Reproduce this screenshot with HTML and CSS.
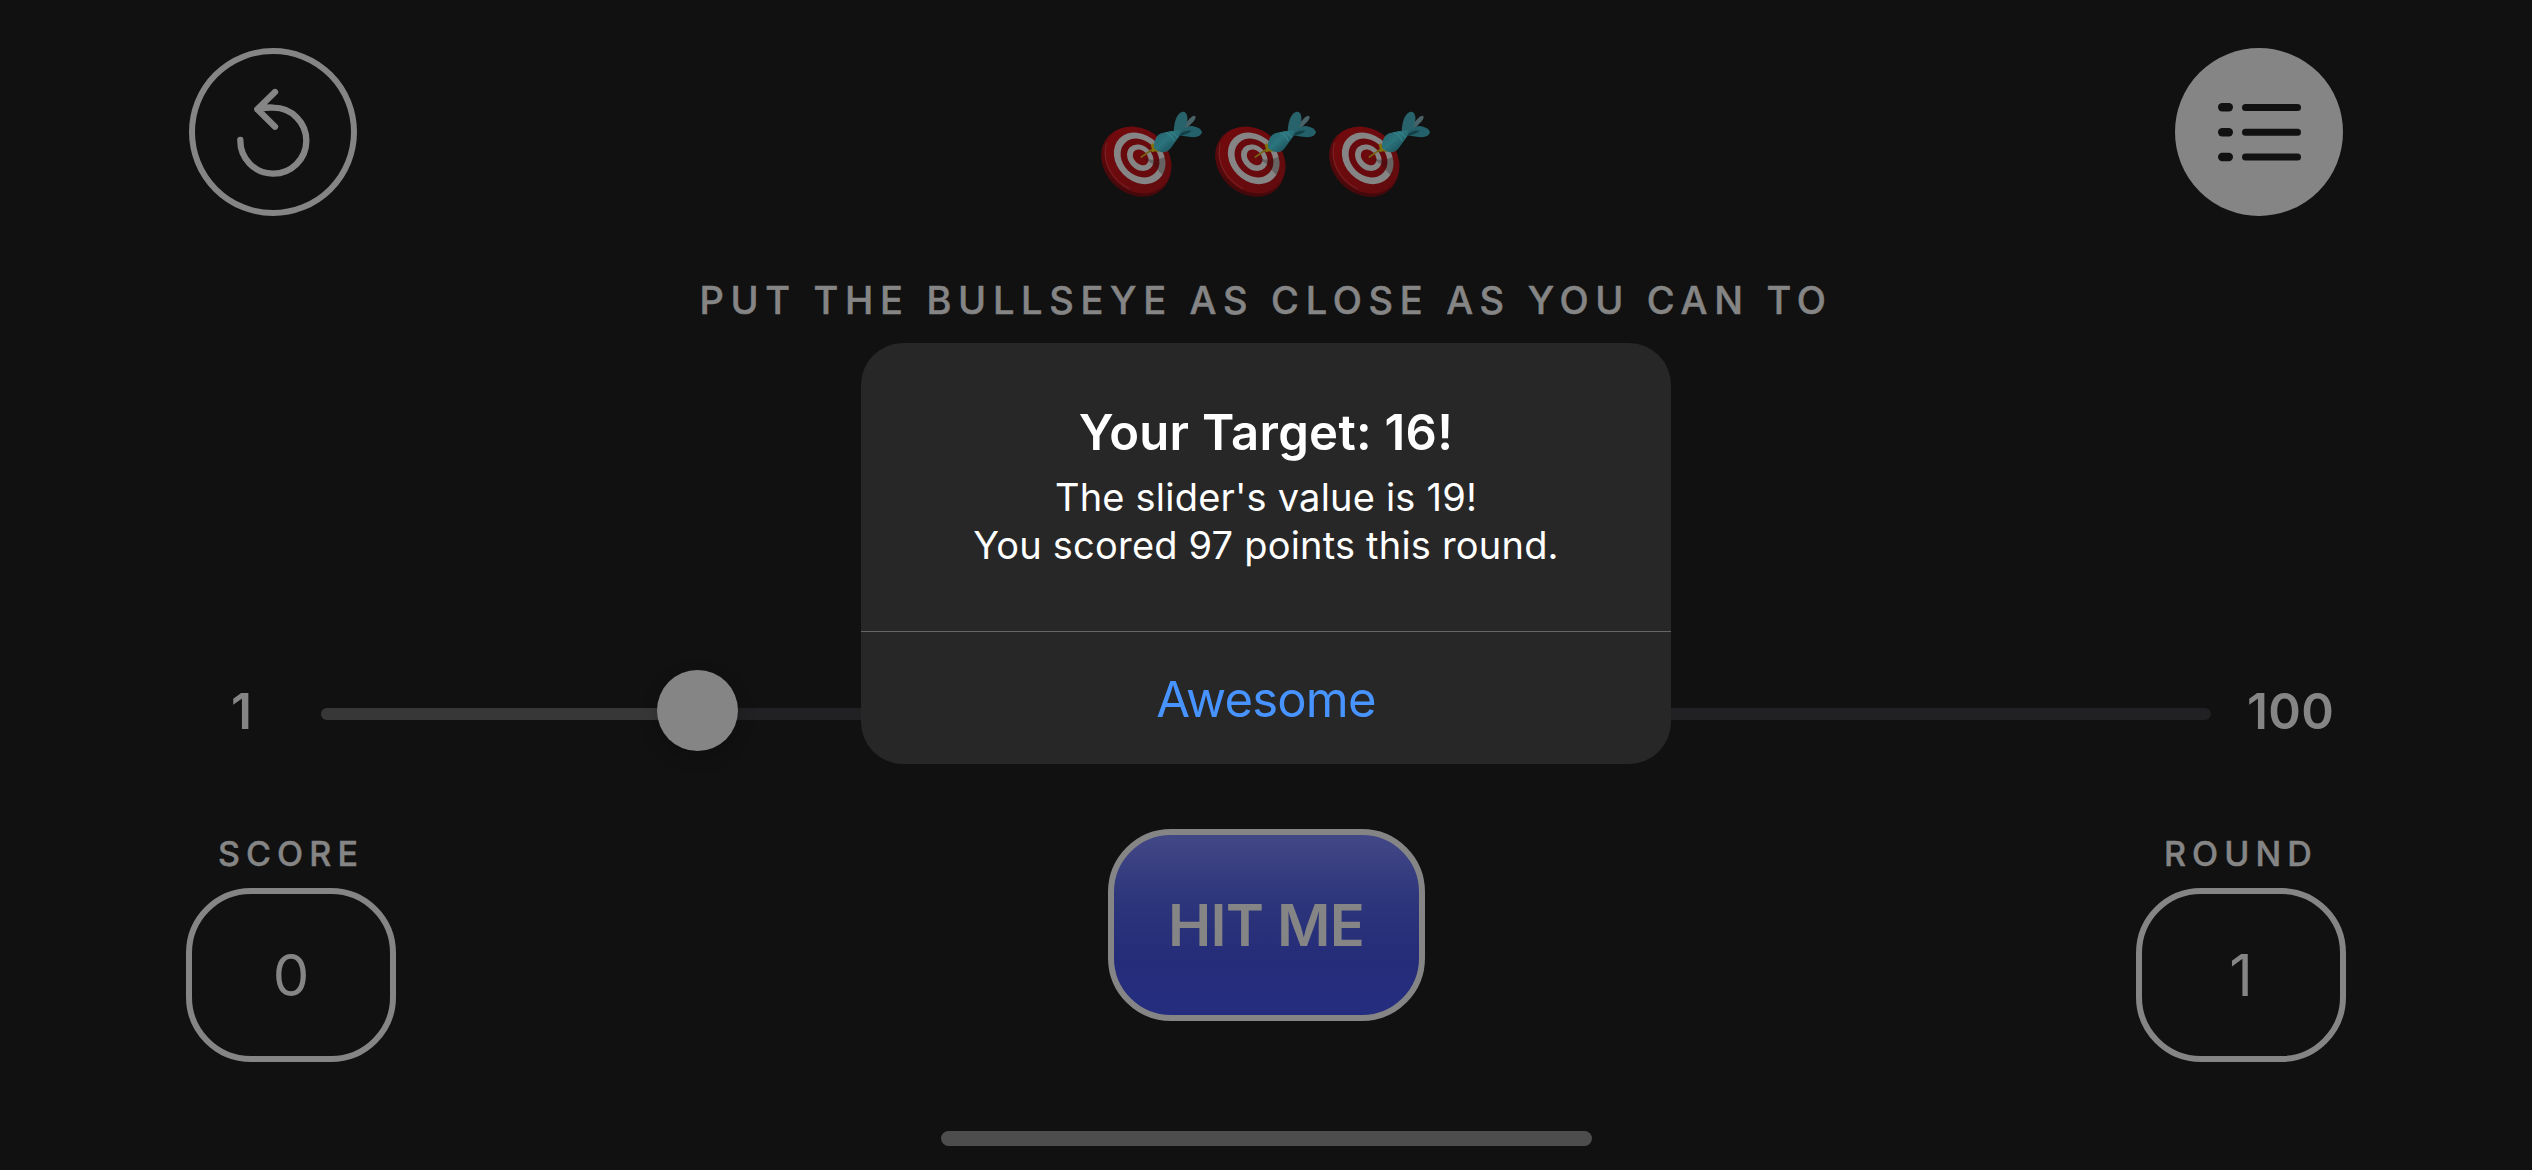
FILE: index.html
```html
<!DOCTYPE html>
<html lang="en">
<head>
<meta charset="utf-8">
<title>Bullseye</title>
<link rel="stylesheet" href="styles.css">
</head>
<body>
<svg class="defs" aria-hidden="true">
  <defs>
    <linearGradient id="rim" x1="0" y1="0" x2="1" y2="1"><stop offset="0" stop-color="#6a0b0e"/><stop offset="0.5" stop-color="#56090c"/><stop offset="1" stop-color="#3c080a"/></linearGradient>
    <linearGradient id="face" x1="0" y1="0" x2="1" y2="0"><stop offset="0" stop-color="#720a0d"/><stop offset="1" stop-color="#620b0e"/></linearGradient>
    <linearGradient id="barrel" x1="0" y1="0" x2="1" y2="1"><stop offset="0" stop-color="#25616a"/><stop offset="0.45" stop-color="#2b747d"/><stop offset="1" stop-color="#153f47"/></linearGradient>
    <symbol id="target" viewBox="45 54 342 270">
      <ellipse cx="168" cy="216" rx="114" ry="94" transform="rotate(45 168 216)" fill="url(#rim)"/>
      <ellipse cx="174" cy="210" rx="109" ry="91" transform="rotate(45 174 210)" fill="url(#face)"/>
      <path d="M80 158C64 205 90 268 148 296" fill="none" stroke="#884044" stroke-width="1.5"/>
      <ellipse cx="179" cy="205" rx="85" ry="69" transform="rotate(45 179 205)" fill="#858585"/>
      <ellipse cx="180" cy="204" rx="64" ry="52" transform="rotate(45 180 204)" fill="#680a0d"/>
      <ellipse cx="181" cy="203" rx="44" ry="35" transform="rotate(45 181 203)" fill="#858585"/>
      <ellipse cx="182" cy="202" rx="27" ry="20" transform="rotate(45 182 202)" fill="#6c0a0d"/>
      <path d="M188 204L215 209Q240 208 254 200Q262 230 248 256Q232 240 218 222Z" fill="#241616" opacity=".3"/>
      <path d="M184 201L220 176" stroke="#746411" stroke-width="5" stroke-linecap="round"/>
      <path d="M212 164L219 159L224 169L238 187L227 184L214 187L216 177Z" fill="#80700b"/>
      <path d="M299 121L330 85Q341 72 347 80Q348 87 335 100L311 125Z" fill="#496267"/>
      <path d="M281 128C282 94 291 70 306 66C320 62 325 80 321 98C317 112 309 122 300 134Z" fill="#28636b"/>
      <path d="M296 130Q316 106 337 108Q362 113 366 126Q364 141 340 142Q320 140 299 136Z" fill="#236069"/>
      <path d="M298 134Q312 120 334 122Q328 131 300 137Z" fill="#153f46"/>
      <path d="M222 164Q224 138 243 130Q270 123 298 121Q304 129 298 139L272 175Q262 187 251 187Q231 185 222 173Z" fill="url(#barrel)"/>
      <path d="M257 128Q275 134 283 153M269 125Q286 132 293 143" fill="none" stroke="#348089" stroke-width="3.5"/>
    </symbol>
  </defs>
</svg>
<main class="game">
  <header class="top">
    <button class="round-button" aria-label="Start over">
      <svg viewBox="0 0 630 600" width="210" height="200"><path transform="translate(6 -6)" d="M211 330A99 99 0 1 0 310 233Q285 231 262 238M315 186L262 238L315 290" fill="none" stroke="#858585" stroke-width="19" stroke-linecap="round" stroke-linejoin="round"/></svg>
    </button>
    <div class="targets">
      <svg><use href="#target"/></svg><svg><use href="#target"/></svg><svg><use href="#target"/></svg>
    </div>
    <button class="round-button filled" aria-label="Leaderboard">
      <svg viewBox="0 0 84 60" width="84" height="60" fill="#111"><rect x="1" y="1" width="15" height="8.4" rx="4.2"/><rect x="25" y="2" width="59" height="7" rx="3.5"/><rect x="1" y="26" width="15" height="8.4" rx="4.2"/><rect x="25" y="26.7" width="59" height="7" rx="3.5"/><rect x="1" y="50.8" width="15" height="8.4" rx="4.2"/><rect x="25" y="51.4" width="59" height="7" rx="3.5"/></svg>
    </button>
  </header>
  <p class="prompt">PUT THE BULLSEYE AS CLOSE AS YOU CAN TO</p>
  <section class="slider">
    <span class="bound low">1</span>
    <div class="track"><div class="fill"></div><div class="thumb"></div></div>
    <span class="bound high">100</span>
  </section>
  <footer class="bottom">
    <div class="stat"><span class="label">SCORE</span><div class="box">0</div></div>
    <button class="hit">HIT ME</button>
    <div class="stat"><span class="label">ROUND</span><div class="box">1</div></div>
  </footer>
  <div class="home"></div>
</main>
<div class="alert" role="alertdialog">
  <div class="message">
    <h1>Your Target: 16!</h1>
    <p>The slider's value is 19!<br>You scored 97 points this round.</p>
  </div>
  <button class="action">Awesome</button>
</div>
</body>
</html>
```
FILE: styles.css
```css
* { box-sizing: border-box; margin: 0; padding: 0; }
body {
  width: 2532px;
  height: 1170px;
  overflow: hidden;
  background: #111;
  color: #858585;
  font-family: Inter, "Liberation Sans", sans-serif;
}
button { border: 0; background: none; color: inherit; font: inherit; }
.defs { position: absolute; width: 0; height: 0; }
.game { display: flex; flex-direction: column; height: 1170px; padding-top: 48px; }
.top { display: flex; justify-content: space-between; height: 168px; padding: 0 189px; }
.round-button {
  display: flex;
  align-items: center;
  justify-content: center;
  width: 168px;
  height: 168px;
  border: 6px solid #858585;
  border-radius: 50%;
}
.round-button svg { flex: none; }
.filled { background: #858585; }
.targets { display: flex; padding-top: 60px; }
.targets svg { width: 114px; height: 90px; }
.prompt {
  margin-top: 60px;
  height: 48px;
  line-height: 48px;
  text-align: center;
  font-size: 38px;
  font-weight: 500;
  letter-spacing: 6.68px;
  -webkit-text-stroke: .5px #858585;
}
.slider { display: flex; align-items: center; height: 81px; margin-top: 346px; padding: 0 0 0 231px; }
.bound { font-size: 49.5px; font-weight: 600; line-height: 60px; }
.low { width: 90px; }
.high { margin-left: 36px; letter-spacing: .3px; }
.track { position: relative; flex: none; width: 1890px; height: 12px; margin-top: 7px; border-radius: 6px; background: #212123; }
.fill { width: 376px; height: 12px; border-radius: 6px; background: #373737; }
.thumb {
  position: absolute;
  left: 336px;
  top: -38px;
  width: 81px;
  height: 81px;
  border-radius: 50%;
  background: #858585;
  box-shadow: 0 6px 18px rgba(0, 0, 0, .2);
}
.bottom { display: flex; justify-content: space-between; height: 233px; margin-top: 78px; padding: 0 186px; }
.stat { display: flex; flex-direction: column; align-items: center; width: 210px; padding-top: 5px; }
.label {
  height: 54px;
  line-height: 40px;
  font-size: 34px;
  font-weight: 500;
  letter-spacing: 6.1px;
  -webkit-text-stroke: .5px #858585;
}
.box {
  display: flex;
  align-items: center;
  justify-content: center;
  width: 210px;
  height: 174px;
  border: 6px solid #858585;
  border-radius: 65px;
  font-size: 58px;
}
.hit {
  width: 317px;
  height: 192px;
  border: 6px solid #858585;
  border-radius: 63px;
  background: linear-gradient(#444987, #2c347a 40%, #252d7a 67%, #252d80) border-box;
  font-size: 58px;
  font-weight: 600;
  letter-spacing: -0.8px;
}
.home { width: 651px; height: 15px; margin: 69px 0 0 941px; border-radius: 8px; background: #4d4d4d; }
.alert {
  position: absolute;
  left: 861px;
  top: 343px;
  display: flex;
  flex-direction: column;
  width: 810px;
  height: 421px;
  border-radius: 42px;
  background: #272727;
  color: #fff;
  text-align: center;
}
.message { height: 289px; padding-top: 60px; border-bottom: 1px solid #666; }
.message h1 { height: 60px; line-height: 60px; font-size: 49px; font-weight: 600; letter-spacing: .3px; }
.message p { margin-top: 10px; font-size: 38px; line-height: 48px; letter-spacing: .2px; }
.action { flex: 1; padding-top: 2px; color: #4793ff; font-size: 49px; letter-spacing: -0.8px; }
```
